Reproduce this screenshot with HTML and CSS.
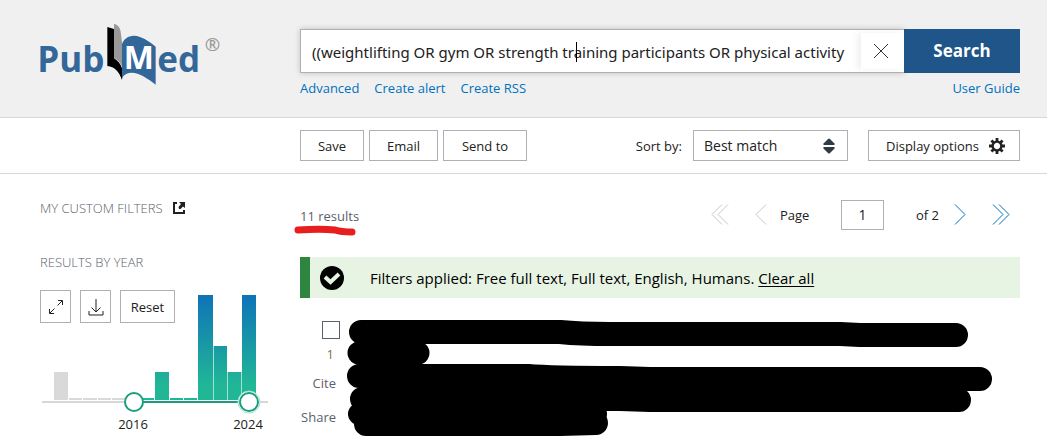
FILE: index.html
```html
<!DOCTYPE html>
<html lang="en">
<head>
<meta charset="utf-8">
<title>Search results - PubMed</title>
<link rel="stylesheet" href="styles.css">
</head>
<body>
<header class="header">
  <a class="logo" href="#" aria-label="PubMed home">
    <svg width="195" height="80" viewBox="0 0 585 240" aria-hidden="true">
      <path fill="#000" d="M232 36L252 42V130C262 136 272 146 276 160V195C268 172 254 154 232 153Z"/>
      <path fill="#999" d="M252 27C262 29 270 36 272 50L277 88V158C273 146 264 134 252 130Z"/>
      <path fill="#369" d="M276 88C283 68 303 56 330 66C350 74 364 84 377 95V209C350 189 318 166 290 176C280 180 276 187 276 195Z"/>
      <text class="logo-text" x="22" y="171">Pub</text>
      <text class="logo-text" x="382" y="171">ed</text>
      <text class="logo-m" x="281" y="163">M</text>
      <text class="logo-mark" x="524" y="108">®</text>
    </svg>
  </a>
  <div class="search-area">
    <form class="search">
      <div class="field">
        <input class="query" type="text" aria-label="Search term" value="((weightlifting OR gym OR strength training participants OR physical activity">
        <span class="caret"></span>
        <button class="clear" type="button" aria-label="Clear search">
          <svg width="16" height="16" viewBox="0 0 16 16" fill="none" stroke="#333"><path d="M1 1L15 15M15 1L1 15"/></svg>
        </button>
      </div>
      <button class="submit" type="submit">Search</button>
    </form>
    <nav class="links">
      <a href="#">Advanced</a>
      <a href="#">Create alert</a>
      <a href="#">Create RSS</a>
      <a class="guide" href="#">User Guide</a>
    </nav>
  </div>
</header>

<div class="toolbar">
  <button class="btn save" type="button">Save</button>
  <button class="btn email" type="button">Email</button>
  <button class="btn send" type="button">Send to</button>
  <label class="sort-label" for="sort">Sort by:</label>
  <div class="sort">
    <select id="sort"><option>Best match</option></select>
    <svg class="sort-icon" width="12" height="16" viewBox="0 0 12 16" fill="#323a45"><path d="M1 7L0 6L5 1Q6 0 7 1L12 6L11 7ZM1 9L0 10L5 15Q6 16 7 15L12 10L11 9Z"/></svg>
  </div>
  <button class="btn display" type="button">Display options
    <svg width="16" height="16" viewBox="-8 -8 16 16" fill="none" stroke="#212121">
      <circle r="4.4" stroke-width="2.4"/>
      <path stroke-width="2.8" d="M0-5V-8M0 5V8M-5 0H-8M5 0H8M3.5-3.5L5.6-5.6M-3.5-3.5L-5.6-5.6M3.5 3.5L5.6 5.6M-3.5 3.5L-5.6 5.6"/>
    </svg>
  </button>
</div>

<div class="content">
  <aside class="sidebar">
    <h3 class="side-title">MY CUSTOM FILTERS
      <a href="#" aria-label="Open custom filters"><svg width="12" height="12" viewBox="0 0 12 12"><path fill="none" stroke="#212121" stroke-width="2" d="M4 1H1V11H11V8"/><path fill="#212121" d="M6 0H12V6L10 4.5L7.5 7L6 7L5.5 5L8 2Z"/></svg></a>
    </h3>
    <h3 class="side-title">RESULTS BY YEAR</h3>
    <div class="timeline">
      <svg class="chart" viewBox="0 0 230 146" role="img" aria-label="Results by year, 2016 to 2024">
        <defs>
          <linearGradient id="fill" gradientUnits="userSpaceOnUse" x1="0" y1="5" x2="0" y2="110">
            <stop offset="0" stop-color="#0f73b8"/><stop offset=".85" stop-color="#20b696"/><stop offset="1" stop-color="#20b696"/>
          </linearGradient>
        </defs>
        <path stroke="#d7d7d7" stroke-width="2" d="M2 112H228"/>
        <g fill="#d9d9d9">
          <rect x="14" y="82" width="14" height="28"/>
          <path d="M29 108h13v2h-13zM43 108h14v2h-14zM58 108h13v2h-13zM72 108h13v2h-13z"/>
        </g>
        <g fill="url(#fill)">
          <path d="M100 108h14v2h-14zM130 108h13v2h-13zM144 108h13v2h-13z"/>
          <rect x="115" y="82" width="14" height="28"/>
          <rect x="158" y="5" width="15" height="105"/>
          <rect x="173" y="56" width="14" height="54"/>
          <rect x="188" y="82" width="13" height="28"/>
          <rect x="202" y="5" width="14" height="105"/>
        </g>
        <path stroke="#a4e0d3" d="M173.500 56V110M187.500 82V110M201.500 82V110"/>
        <path stroke="#1a9e7e" stroke-width="2" d="M94 112H209"/>
        <g fill="#fff" stroke="#a4e0d3"><circle cx="209" cy="112" r="11"/></g>
        <g fill="#fff" stroke="#1a9e7e" stroke-width="2"><circle cx="94" cy="112" r="9"/><circle cx="209" cy="112" r="9"/></g>
        <g class="years"><text x="93" y="139">2016</text><text x="208" y="139">2024</text></g>
      </svg>
      <div class="chart-buttons">
        <button class="tool" type="button" aria-label="Expand"><svg width="14" height="14" viewBox="0 0 14 14" fill="none" stroke="#212121"><path d="M8.500 5.500L13 1M9 .5H13.500V5M5.500 8.500L1 13M.5 9V13.500H5"/></svg></button>
        <button class="tool" type="button" aria-label="Download"><svg width="16" height="18" viewBox="0 0 16 18" fill="none" stroke="#212121"><path d="M8 1V14M3.500 9.500L8 14L12.500 9.500M1 13V17H15V13"/></svg></button>
        <button class="tool reset" type="button">Reset</button>
      </div>
    </div>
  </aside>

  <main class="results">
    <div class="results-top">
      <div class="count">11 results
        <svg class="marker" width="64" height="12" viewBox="0 0 64 12" fill="none" stroke="#e81e1e" stroke-width="7" stroke-linecap="round" stroke-linejoin="round"><path d="M4 5C18 4 32 4 41 5C47 7 53 7 58 7"/></svg>
      </div>
      <nav class="pager" aria-label="Pages">
        <button class="page-btn off first" type="button" aria-label="First page"><svg width="18" height="21" viewBox="0 0 18 21"><path d="M11 .5L1 10.500L11 20.500M17 .5L7 10.500L17 20.500"/></svg></button>
        <button class="page-btn off" type="button" aria-label="Previous page"><svg width="12" height="21" viewBox="0 0 12 21"><path d="M11 .5L1 10.500L11 20.500"/></svg></button>
        <label class="page-label" for="page">Page</label>
        <input class="page" id="page" type="text" value="1">
        <span class="total">of 2</span>
        <button class="page-btn next" type="button" aria-label="Next page"><svg width="12" height="21" viewBox="0 0 12 21"><path d="M1 .5L11 10.500L1 20.500"/></svg></button>
        <button class="page-btn last" type="button" aria-label="Last page"><svg width="18" height="21" viewBox="0 0 18 21"><path d="M1 .5L11 10.500L1 20.500M7 .5L17 10.500L7 20.500"/></svg></button>
      </nav>
    </div>
    <div class="banner">
      <svg width="24" height="24" viewBox="0 0 24 24"><circle cx="12" cy="12" r="12"/><path fill="none" stroke="#e7f4e4" stroke-width="4" d="M5 11L10.500 16L19 8"/></svg>
      <p>Filters applied: Free full text, Full text, English, Humans. <a href="#">Clear all</a></p>
    </div>
    <article class="item">
      <div class="item-side">
        <input class="check" id="pick" type="checkbox" aria-label="Select result 1">
        <label class="num" for="pick">1</label>
        <button class="link-btn" type="button">Cite</button>
        <button class="link-btn" type="button">Share</button>
      </div>
      <svg class="redacted" viewBox="347 318 673 118" fill="none" stroke="#000" stroke-linecap="round" stroke-linejoin="round" aria-hidden="true">
        <path stroke-width="24" d="M361 332H560C580 334 590 334 610 334H840L860 335H956"/>
        <path stroke-width="23" d="M359 353H418"/>
        <path stroke-width="24" d="M359 376H528C550 378 580 378 620 378L650 379H980"/>
        <path stroke-width="24" d="M362 399H620L650 400H959"/>
        <path stroke-width="22" d="M359 414H596"/>
        <path stroke-width="24" d="M366 424H560L596 423"/>
      </svg>
    </article>
  </main>
</div>
</body>
</html>
```
FILE: styles.css
```css
* { box-sizing: border-box; }

body {
  margin: 0;
  background: #fff;
  color: #212121;
  font: 13px/20px "Open Sans", "Noto Sans", sans-serif;
}

button, input, select { font: inherit; color: inherit; margin: 0; border-radius: 0; }
button { padding: 0; border: 0; background: none; white-space: nowrap; }
svg { display: block; }

.header, .content {
  display: grid;
  grid-template-columns: 260px minmax(0, 1fr);
  padding: 0 27px 0 40px;
}

.header {
  height: 118px;
  background: #f0f0f0;
  border-bottom: 1px solid #d7d7d7;
}

.logo { justify-self: start; margin-left: -10px; padding-top: 15px; }
.logo-text { font: 700 105px "Open Sans", sans-serif; fill: #369; }
.logo-m { font: 700 96px "Open Sans", sans-serif; fill: #fff; }
.logo-mark { font: 600 56px "Open Sans", sans-serif; fill: #999; }

.search-area { padding-top: 29px; }
.search { display: flex; height: 44px; }

.field {
  position: relative;
  display: flex;
  flex: 1;
  background: #fff;
  border: 1px solid #aeb0b5;
  border-right: 0;
  box-shadow: 0 0 6px rgba(0, 0, 0, .2);
}

.query {
  flex: 1;
  min-width: 0;
  padding: 2px 0 0 11px;
  border: 0;
  outline: 0;
  background: none;
  font-family: "Noto Sans", sans-serif;
  font-size: 15px;
}

.caret {
  position: absolute;
  left: 275px;
  top: 12px;
  width: 1px;
  height: 20px;
  background: #000;
}

.clear {
  display: grid;
  place-items: center;
  width: 43px;
  margin: 3px 0;
  padding-right: 3px;
  background: #fff;
  box-shadow: -4px 0 6px rgba(0, 0, 0, .06);
}

.submit {
  position: relative;
  width: 116px;
  background: #205589;
  color: #fff;
  font-size: 17px;
  font-weight: 700;
}

.links { display: flex; gap: 15px; padding-top: 5px; }
.links a { color: #0071bc; text-decoration: none; }
.links .guide { margin-left: auto; }

.toolbar {
  display: flex;
  align-items: center;
  height: 56px;
  padding: 0 27px 0 300px;
  border-bottom: 1px solid #d7d7d7;
}

.btn {
  height: 31px;
  margin-right: 5px;
  border: 1px solid #aeb0b5;
  background: #fff;
}

.save { width: 64px; }
.email { width: 69px; }
.send { width: 84px; }
.sort-label { margin-left: auto; }
.sort { position: relative; margin: 0 20px 0 11px; }

.sort select {
  width: 155px;
  height: 31px;
  padding: 0 10px;
  border: 1px solid #aeb0b5;
  background: #fff;
  appearance: none;
  font-size: 14px;
}

.sort-icon { position: absolute; right: 13px; top: 8px; pointer-events: none; }

.display {
  display: flex;
  align-items: center;
  justify-content: space-between;
  width: 152px;
  margin: 0;
  padding: 0 14px 0 17px;
}

.sidebar { padding-top: 24px; }

.side-title {
  display: flex;
  align-items: center;
  gap: 10px;
  height: 20px;
  margin: 0 0 34px;
  color: #5b616b;
  font-size: 13px;
  font-weight: 300;
}

.side-title + .side-title { margin-bottom: 18px; }

.timeline { display: grid; width: 230px; }
.chart, .chart-buttons { grid-area: 1 / 1; }
.chart { width: 100%; }
.years { font: 13px "Open Sans", sans-serif; fill: #212121; text-anchor: middle; }
.chart-buttons { position: relative; display: flex; align-items: start; gap: 9px; }

.tool {
  display: grid;
  place-items: center;
  width: 31px;
  height: 33px;
  border: 1px solid #aeb0b5;
}

.reset { width: 55px; }

.results-top {
  display: flex;
  align-items: center;
  justify-content: space-between;
  height: 83px;
}

.count { position: relative; color: #5b616b; }
.marker { position: absolute; left: -6px; top: 19px; }

.pager { display: flex; align-items: center; padding: 0 10px 2px 0; }
.page-btn svg { fill: none; stroke: #0071bc; }
.page-btn.off svg { stroke: #c4c6ca; }
.first { margin-right: 26px; }
.page-label { width: 74px; padding-left: 13px; }
.next { margin-left: 15px; }
.last { margin-left: 26px; }

.page {
  width: 43px;
  height: 30px;
  padding: 0;
  border: 1px solid #aeb0b5;
  text-align: center;
  font-size: 14px;
}

.total { margin-left: 32px; }

.banner {
  display: flex;
  align-items: center;
  gap: 26px;
  height: 41px;
  padding-left: 10px;
  border-left: 10px solid #2e8540;
  background: #e7f4e4;
  color: #000;
  font-size: 15px;
}

.banner p { margin: 0; }
.banner a { color: inherit; text-underline-offset: 2px; }

.item {
  display: grid;
  grid-template-columns: 47px minmax(0, 1fr);
  padding-top: 20px;
}

.item-side {
  display: flex;
  flex-direction: column;
  align-items: flex-end;
  padding: 3px 11px 0 0;
  color: #5b616b;
}

.check {
  appearance: none;
  width: 18px;
  height: 18px;
  margin-right: -4px;
  border: 1px solid #5b616b;
}

.num { margin: 5px 2px 9px 0; color: #8a6e55; }
.link-btn { margin-bottom: 14px; }
.item-side .link-btn:last-child { margin-bottom: 0; }
.redacted { width: 100%; }
```
